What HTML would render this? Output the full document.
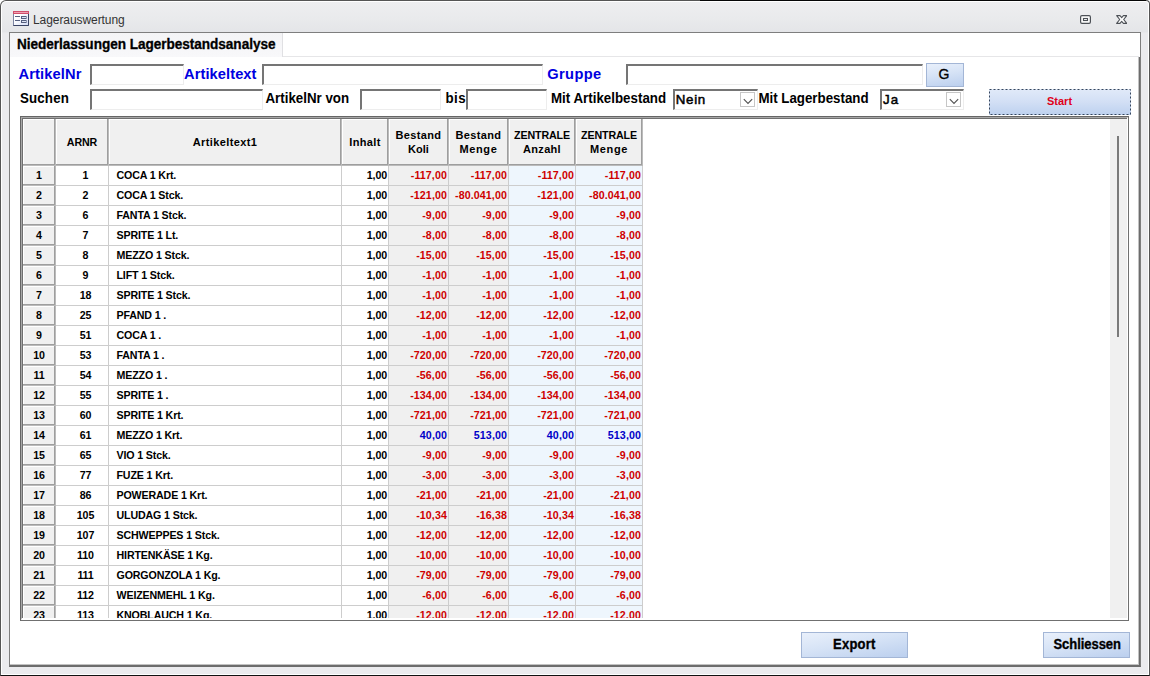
<!DOCTYPE html>
<html lang="de"><head><meta charset="utf-8"><title>Lagerauswertung</title>
<style>
*{box-sizing:border-box;margin:0;padding:0}
html,body{width:1150px;height:676px;overflow:hidden;background:#fff;font-family:"Liberation Sans",sans-serif}
.a{position:absolute}
#win{left:0;top:0;width:1150px;height:676px;background:linear-gradient(#eeeef0 0,#e9eaec 18px,#e4e5e8 31px,#ebebee 32px,#ebebee 100%);border:1px solid #555;border-bottom-color:#111;border-radius:6px 4px 0 0;box-shadow:inset 0 0 0 1px #fff}
#client{left:9px;top:32px;width:1132px;height:635px;background:#fff;border:1px solid #7e7e7e;border-bottom:2px solid #6c6c6c}
#cr{left:1139px;top:57px;width:1px;height:609px;background:#6c6c6c}
#hdr{left:10px;top:33px;width:273px;height:24px;background:linear-gradient(#f4f4f6,#f8f8fa);border-right:1px solid #e0e0e3}
#hdrline{left:283px;top:56px;width:856px;height:1px;background:#e6e6e8}
.ws{-webkit-text-stroke:0.5px #000}
.ws2{-webkit-text-stroke:0.3px #000}
.t{position:absolute;white-space:nowrap;line-height:1;font-weight:bold}
.inp{position:absolute;background:#fff;border-top:2px solid;border-left:2px solid;border-right:1px solid #ededed;border-bottom:1px solid #ededed;border-top-color:#757575;border-left-color:#757575}
.btn{position:absolute;background:linear-gradient(170deg,#e9f0fb 0,#d6e3f6 45%,#bbcfee 100%);border:1px solid #a3b6d6}
.cb{position:absolute;width:15px;height:15px;background:#fff;border:1px solid #c6c6c6}
#g0{left:20px;top:116px;width:1109px;height:505px;border:1px solid #666;border-right-color:#707070;border-bottom-color:#707070;background:#fff}
#g1{left:21px;top:117px;width:1107px;height:503px;border-top:1px solid #a8a8a8;border-left:1px solid #a8a8a8;border-right:1px solid #fff;border-bottom:2px solid #fff}
#g2{left:22px;top:118px;width:1105px;height:500px;border-top:1px solid #707070;border-left:1px solid #707070}
#gv{left:23px;top:119px;width:1104px;height:499px;overflow:hidden}
.h{position:absolute;top:0;height:47px;background:#f0f0f0;box-shadow:inset -1px -1px 0 #bbb,inset -2px -2px 0 #9e9e9e,inset 1px 1px 0 #fff;font-size:10.67px;letter-spacing:-0.1px;font-weight:bold;text-align:center;color:#000;display:flex;align-items:center;justify-content:center;line-height:14px;padding-bottom:2px;padding-right:1px}
.r{position:absolute;left:0;height:20px;width:620px}
.c{position:absolute;top:0;height:20px;font-size:10.67px;letter-spacing:-0.14px;font-weight:bold;line-height:18px;border-right:1px solid #cdcdcd;border-bottom:1px solid #cdcdcd;white-space:nowrap;overflow:hidden;color:#000;background:#fff}
.rh{left:0;width:33px;background:#f0f0f0;text-align:center;border:0;box-shadow:inset -1px -1px 0 #bbb,inset -2px -2px 0 #9e9e9e,inset 1px 1px 0 #fff;padding-right:1px}
.c1{left:33px;width:53px;text-align:center;padding-left:7px}
.c2{left:86px;width:233px;padding-left:7.5px}
.c3{left:319px;width:47px;text-align:right;padding-right:1px}
.c4{left:366px;width:60px;text-align:right;padding-right:1px;background:#f0f0f0}
.c5{left:426px;width:60px;text-align:right;padding-right:1px;background:#f0f0f0}
.c6{left:486px;width:67px;text-align:right;padding-right:1px;background:#eef6fd}
.c7{left:553px;width:67px;text-align:right;padding-right:1px;background:#eef6fd}
.neg{color:#cf0000;letter-spacing:0.1px}.pos{color:#0000c8;letter-spacing:0.1px}
</style></head><body>
<div id="win" class="a"></div>
<svg class="a" style="left:13px;top:11px" width="16" height="15" viewBox="0 0 16 15">
 <defs><linearGradient id="ig" x1="0" y1="0" x2="1" y2="1"><stop offset="0.35" stop-color="#ffffff"/><stop offset="1" stop-color="#d4dcf6"/></linearGradient></defs>
 <rect x="0.5" y="0.5" width="15" height="14" fill="url(#ig)" stroke="#7c84a2"/>
 <path d="M15.5 3 V14.5 H0.5" fill="none" stroke="#3a4464"/>
 <rect x="0" y="0" width="16" height="3" fill="#cf4f6b"/>
 <rect x="1" y="1" width="14" height="1" fill="#f0a0b2"/>
 <rect x="2" y="5" width="5" height="1" fill="#56607f"/><rect x="2" y="9" width="5" height="1" fill="#56607f"/>
 <rect x="8.5" y="5.5" width="4.6" height="2" fill="#dfe4f4" stroke="#56607f"/>
 <rect x="8.5" y="9.5" width="4.6" height="2" fill="#dfe4f4" stroke="#56607f"/>
</svg>
<svg class="a" style="left:1080px;top:15px" width="11" height="9" viewBox="0 0 11 9"><rect x="0.6" y="0.6" width="9.8" height="7.8" rx="1.3" fill="#fcfcfc" stroke="#4c5056" stroke-width="1.2"/><rect x="3.5" y="3.5" width="4" height="2" fill="#fcfcfc" stroke="#4c5056" stroke-width="1.1"/></svg>
<svg class="a" style="left:1115.5px;top:15px" width="11.4" height="9" viewBox="0 0 12 9" preserveAspectRatio="none"><path d="M0.7 0.6 L4.2 0.6 L6 2.6 L7.8 0.6 L11.3 0.6 L8.1 4.5 L11.3 8.4 L7.8 8.4 L6 6.4 L4.2 8.4 L0.7 8.4 L3.9 4.5 Z" fill="#fcfcfc" stroke="#4c5056" stroke-width="1.15" stroke-linejoin="round"/></svg>

<div class="a" style="left:700px;top:0;width:446px;height:1px;background:#050505"></div>
<div id="client" class="a"></div><div id="cr" class="a"></div><div class="a" style="left:1138px;top:57px;width:1px;height:607px;background:#c2c2c2"></div><div class="a" style="left:10px;top:664px;width:1129px;height:1px;background:#c2c2c2"></div>
<div id="hdr" class="a"></div><div id="hdrline" class="a"></div>

<div class="inp" style="left:90px;top:64px;width:94px;height:21px"></div>
<div class="inp" style="left:262px;top:64px;width:281px;height:21px"></div>
<div class="inp" style="left:626px;top:64px;width:297px;height:21px"></div>
<div class="btn" style="left:926px;top:63px;width:38px;height:24px"></div>

<div class="inp" style="left:90px;top:89px;width:173px;height:21px"></div>
<div class="inp" style="left:360px;top:89px;width:81px;height:21px"></div>
<div class="inp" style="left:466px;top:89px;width:81px;height:21px"></div>
<div class="inp" style="left:673px;top:89px;width:85px;height:21px"></div>
<div class="cb" style="left:740px;top:92px"></div>
<svg class="a" style="left:742.5px;top:97.6px" width="10" height="7" viewBox="0 0 10 7"><path d="M0.8 1.2 L5 5.4 L9.2 1.2" fill="none" stroke="#505050" stroke-width="1.1"/></svg>
<div class="inp" style="left:880px;top:89px;width:84px;height:21px"></div>
<div class="cb" style="left:946px;top:92px"></div>
<svg class="a" style="left:948.5px;top:97.6px" width="10" height="7" viewBox="0 0 10 7"><path d="M0.8 1.2 L5 5.4 L9.2 1.2" fill="none" stroke="#505050" stroke-width="1.1"/></svg>
<div class="btn" style="left:989px;top:89px;width:142px;height:26px;border:0;background:linear-gradient(#e1eaf9 0,#d2dff5 50%,#bdd1ef 100%)"></div>
<svg class="a" style="left:989px;top:89px" width="142" height="26" viewBox="0 0 142 26"><rect x="0.5" y="0.5" width="141" height="25" fill="none" stroke="#36465c" stroke-width="1" stroke-dasharray="2 2"/></svg>

<div id="g0" class="a"></div><div id="g1" class="a"></div><div id="g2" class="a"></div>
<div id="gv" class="a">
 <div class="h" style="left:0;width:33px"></div>
 <div class="h" style="left:33px;width:53px"><div>ARNR</div></div>
 <div class="h" style="left:86px;width:233px"><div><span style="font-size:11px;letter-spacing:0.38px">Artikeltext1</span></div></div>
 <div class="h" style="left:319px;width:47px"><div><span style="font-size:11px;letter-spacing:0.35px">Inhalt</span></div></div>
 <div class="h" style="left:366px;width:60px"><div><span style="font-size:11px;letter-spacing:0.35px">Bestand</span><br><span style="font-size:11px;letter-spacing:0px">Koli</span></div></div>
 <div class="h" style="left:426px;width:60px"><div><span style="font-size:11px;letter-spacing:0.35px">Bestand</span><br><span style="font-size:11px;letter-spacing:0.6px">Menge</span></div></div>
 <div class="h" style="left:486px;width:67px"><div>ZENTRALE<br><span style="font-size:11px;letter-spacing:0.3px">Anzahl</span></div></div>
 <div class="h" style="left:553px;width:67px"><div>ZENTRALE<br><span style="font-size:11px;letter-spacing:0.6px">Menge</span></div></div>
 <div class="a" id="rows" style="left:0;top:47px">
<div class="r" style="top:0px"><div class="c rh">1</div><div class="c c1">1</div><div class="c c2">COCA 1 Krt.</div><div class="c c3">1,00</div><div class="c c4 neg">-117,00</div><div class="c c5 neg">-117,00</div><div class="c c6 neg">-117,00</div><div class="c c7 neg">-117,00</div></div>
<div class="r" style="top:20px"><div class="c rh">2</div><div class="c c1">2</div><div class="c c2">COCA 1 Stck.</div><div class="c c3">1,00</div><div class="c c4 neg">-121,00</div><div class="c c5 neg">-80.041,00</div><div class="c c6 neg">-121,00</div><div class="c c7 neg">-80.041,00</div></div>
<div class="r" style="top:40px"><div class="c rh">3</div><div class="c c1">6</div><div class="c c2">FANTA 1 Stck.</div><div class="c c3">1,00</div><div class="c c4 neg">-9,00</div><div class="c c5 neg">-9,00</div><div class="c c6 neg">-9,00</div><div class="c c7 neg">-9,00</div></div>
<div class="r" style="top:60px"><div class="c rh">4</div><div class="c c1">7</div><div class="c c2">SPRITE 1 Lt.</div><div class="c c3">1,00</div><div class="c c4 neg">-8,00</div><div class="c c5 neg">-8,00</div><div class="c c6 neg">-8,00</div><div class="c c7 neg">-8,00</div></div>
<div class="r" style="top:80px"><div class="c rh">5</div><div class="c c1">8</div><div class="c c2">MEZZO 1 Stck.</div><div class="c c3">1,00</div><div class="c c4 neg">-15,00</div><div class="c c5 neg">-15,00</div><div class="c c6 neg">-15,00</div><div class="c c7 neg">-15,00</div></div>
<div class="r" style="top:100px"><div class="c rh">6</div><div class="c c1">9</div><div class="c c2">LIFT 1 Stck.</div><div class="c c3">1,00</div><div class="c c4 neg">-1,00</div><div class="c c5 neg">-1,00</div><div class="c c6 neg">-1,00</div><div class="c c7 neg">-1,00</div></div>
<div class="r" style="top:120px"><div class="c rh">7</div><div class="c c1">18</div><div class="c c2">SPRITE 1 Stck.</div><div class="c c3">1,00</div><div class="c c4 neg">-1,00</div><div class="c c5 neg">-1,00</div><div class="c c6 neg">-1,00</div><div class="c c7 neg">-1,00</div></div>
<div class="r" style="top:140px"><div class="c rh">8</div><div class="c c1">25</div><div class="c c2">PFAND 1 .</div><div class="c c3">1,00</div><div class="c c4 neg">-12,00</div><div class="c c5 neg">-12,00</div><div class="c c6 neg">-12,00</div><div class="c c7 neg">-12,00</div></div>
<div class="r" style="top:160px"><div class="c rh">9</div><div class="c c1">51</div><div class="c c2">COCA 1 .</div><div class="c c3">1,00</div><div class="c c4 neg">-1,00</div><div class="c c5 neg">-1,00</div><div class="c c6 neg">-1,00</div><div class="c c7 neg">-1,00</div></div>
<div class="r" style="top:180px"><div class="c rh">10</div><div class="c c1">53</div><div class="c c2">FANTA 1 .</div><div class="c c3">1,00</div><div class="c c4 neg">-720,00</div><div class="c c5 neg">-720,00</div><div class="c c6 neg">-720,00</div><div class="c c7 neg">-720,00</div></div>
<div class="r" style="top:200px"><div class="c rh">11</div><div class="c c1">54</div><div class="c c2">MEZZO 1 .</div><div class="c c3">1,00</div><div class="c c4 neg">-56,00</div><div class="c c5 neg">-56,00</div><div class="c c6 neg">-56,00</div><div class="c c7 neg">-56,00</div></div>
<div class="r" style="top:220px"><div class="c rh">12</div><div class="c c1">55</div><div class="c c2">SPRITE 1 .</div><div class="c c3">1,00</div><div class="c c4 neg">-134,00</div><div class="c c5 neg">-134,00</div><div class="c c6 neg">-134,00</div><div class="c c7 neg">-134,00</div></div>
<div class="r" style="top:240px"><div class="c rh">13</div><div class="c c1">60</div><div class="c c2">SPRITE 1 Krt.</div><div class="c c3">1,00</div><div class="c c4 neg">-721,00</div><div class="c c5 neg">-721,00</div><div class="c c6 neg">-721,00</div><div class="c c7 neg">-721,00</div></div>
<div class="r" style="top:260px"><div class="c rh">14</div><div class="c c1">61</div><div class="c c2">MEZZO 1 Krt.</div><div class="c c3">1,00</div><div class="c c4 pos">40,00</div><div class="c c5 pos">513,00</div><div class="c c6 pos">40,00</div><div class="c c7 pos">513,00</div></div>
<div class="r" style="top:280px"><div class="c rh">15</div><div class="c c1">65</div><div class="c c2">VIO 1 Stck.</div><div class="c c3">1,00</div><div class="c c4 neg">-9,00</div><div class="c c5 neg">-9,00</div><div class="c c6 neg">-9,00</div><div class="c c7 neg">-9,00</div></div>
<div class="r" style="top:300px"><div class="c rh">16</div><div class="c c1">77</div><div class="c c2">FUZE 1 Krt.</div><div class="c c3">1,00</div><div class="c c4 neg">-3,00</div><div class="c c5 neg">-3,00</div><div class="c c6 neg">-3,00</div><div class="c c7 neg">-3,00</div></div>
<div class="r" style="top:320px"><div class="c rh">17</div><div class="c c1">86</div><div class="c c2">POWERADE 1 Krt.</div><div class="c c3">1,00</div><div class="c c4 neg">-21,00</div><div class="c c5 neg">-21,00</div><div class="c c6 neg">-21,00</div><div class="c c7 neg">-21,00</div></div>
<div class="r" style="top:340px"><div class="c rh">18</div><div class="c c1">105</div><div class="c c2">ULUDAG 1 Stck.</div><div class="c c3">1,00</div><div class="c c4 neg">-10,34</div><div class="c c5 neg">-16,38</div><div class="c c6 neg">-10,34</div><div class="c c7 neg">-16,38</div></div>
<div class="r" style="top:360px"><div class="c rh">19</div><div class="c c1">107</div><div class="c c2">SCHWEPPES 1 Stck.</div><div class="c c3">1,00</div><div class="c c4 neg">-12,00</div><div class="c c5 neg">-12,00</div><div class="c c6 neg">-12,00</div><div class="c c7 neg">-12,00</div></div>
<div class="r" style="top:380px"><div class="c rh">20</div><div class="c c1">110</div><div class="c c2">HIRTENKÄSE 1 Kg.</div><div class="c c3">1,00</div><div class="c c4 neg">-10,00</div><div class="c c5 neg">-10,00</div><div class="c c6 neg">-10,00</div><div class="c c7 neg">-10,00</div></div>
<div class="r" style="top:400px"><div class="c rh">21</div><div class="c c1">111</div><div class="c c2">GORGONZOLA 1 Kg.</div><div class="c c3">1,00</div><div class="c c4 neg">-79,00</div><div class="c c5 neg">-79,00</div><div class="c c6 neg">-79,00</div><div class="c c7 neg">-79,00</div></div>
<div class="r" style="top:420px"><div class="c rh">22</div><div class="c c1">112</div><div class="c c2">WEIZENMEHL 1 Kg.</div><div class="c c3">1,00</div><div class="c c4 neg">-6,00</div><div class="c c5 neg">-6,00</div><div class="c c6 neg">-6,00</div><div class="c c7 neg">-6,00</div></div>
<div class="r" style="top:440px"><div class="c rh">23</div><div class="c c1">113</div><div class="c c2">KNOBLAUCH 1 Kg.</div><div class="c c3">1,00</div><div class="c c4 neg">-12,00</div><div class="c c5 neg">-12,00</div><div class="c c6 neg">-12,00</div><div class="c c7 neg">-12,00</div></div>
 </div>
 <div class="a" style="left:1087px;top:0;width:17px;height:500px;background:#f0f0f0"></div>
 <div class="a" style="left:1094px;top:17px;width:2px;height:201px;background:#7a7a7a"></div>
</div>

<div class="btn" style="left:801px;top:632px;width:107px;height:26px"></div>
<div class="btn" style="left:1043px;top:632px;width:87px;height:26px"></div>
<div class="t " id="l_title" style="left:33px;top:13.84px;font-size:12px;font-weight:normal;color:#333;letter-spacing:-0.07px">Lagerauswertung</div>
<div class="t ws2" id="l_hdr" style="left:17px;top:38.49px;font-size:13.6px;font-weight:bold;color:#000;letter-spacing:-0.04px;transform:scaleY(1.06);transform-origin:0 84.65%">Niederlassungen Lagerbestandsanalyse</div>
<div class="t " id="l_anr" style="left:18.5px;top:66.58px;font-size:14.67px;font-weight:bold;color:#0000e0;letter-spacing:0.13px">ArtikelNr</div>
<div class="t " id="l_atx" style="left:184.0px;top:66.58px;font-size:14.67px;font-weight:bold;color:#0000e0;letter-spacing:0.08px">Artikeltext</div>
<div class="t " id="l_grp" style="left:547.2px;top:66.58px;font-size:14.67px;font-weight:bold;color:#0000e0;letter-spacing:0.38px">Gruppe</div>
<div class="t " id="l_su" style="left:20.0px;top:92.12px;font-size:13.33px;font-weight:bold;color:#000;letter-spacing:0.14px;transform:scaleY(1.08);transform-origin:0 84.65%">Suchen</div>
<div class="t " id="l_av" style="left:265.5px;top:92.12px;font-size:13.33px;font-weight:bold;color:#000;letter-spacing:-0.01px;transform:scaleY(1.08);transform-origin:0 84.65%">ArtikelNr von</div>
<div class="t " id="l_bis" style="left:445.5px;top:92.12px;font-size:13.33px;font-weight:bold;color:#000;letter-spacing:0.44px;transform:scaleY(1.08);transform-origin:0 84.65%">bis</div>
<div class="t " id="l_mab" style="left:550.9px;top:92.12px;font-size:13.33px;font-weight:bold;color:#000;letter-spacing:0.01px;transform:scaleY(1.08);transform-origin:0 84.65%">Mit Artikelbestand</div>
<div class="t " id="l_mlb" style="left:758.4px;top:92.12px;font-size:13.33px;font-weight:bold;color:#000;letter-spacing:-0.01px;transform:scaleY(1.08);transform-origin:0 84.65%">Mit Lagerbestand</div>
<div class="t ws" id="l_nein" style="left:675.7px;top:92.72px;font-size:13.33px;font-weight:normal;color:#000;letter-spacing:0.7px">Nein</div>
<div class="t ws" id="l_ja" style="left:883px;top:92.72px;font-size:13.33px;font-weight:normal;color:#000;letter-spacing:1px">Ja</div>
<div class="t ws2" id="l_g" style="left:938.5px;top:67.15px;font-size:14px;font-weight:normal;color:#000;letter-spacing:0px">G</div>
<div class="t " id="l_start" style="left:1047px;top:95.69px;font-size:11px;font-weight:bold;color:#e0001a;letter-spacing:0px">Start</div>
<div class="t ws2" id="l_exp" style="left:833px;top:638.20px;font-size:13px;font-weight:bold;color:#000;letter-spacing:0.25px;transform:scaleY(1.08);transform-origin:0 84.65%">Export</div>
<div class="t ws2" id="l_sch" style="left:1053.5px;top:638.20px;font-size:13px;font-weight:bold;color:#000;letter-spacing:-0.05px;transform:scaleY(1.08);transform-origin:0 84.65%">Schliessen</div>
</body></html>
